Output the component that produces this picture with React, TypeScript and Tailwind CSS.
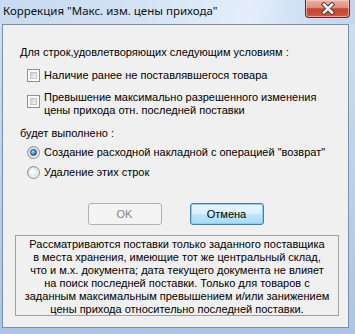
import React from "react";

function CheckBox() {
  return (
    <div className="w-[13px] h-[13px] shrink-0 border border-[#8e8f8f] bg-white p-[2px]">
      <div className="w-full h-full border border-[#c4c4c4] bg-[linear-gradient(135deg,#d0d0d0_0%,#e4e4e4_50%,#f6f6f6_100%)]" />
    </div>
  );
}

function Radio({ checked }: { checked?: boolean }) {
  return (
    <div className="w-[13px] h-[13px] shrink-0 rounded-full border border-[#8e8f8f] bg-[linear-gradient(135deg,#d2d2d2_0%,#f4f4f4_100%)] flex items-center justify-center">
      {checked ? (
        <div className="w-[7px] h-[7px] rounded-full border border-[#1b4f85] bg-[radial-gradient(circle_at_35%_35%,#b8e3ff_0%,#3d8fdb_50%,#14509a_100%)]" />
      ) : (
        <div className="w-[9px] h-[9px] rounded-full bg-[radial-gradient(circle_at_40%_40%,#ffffff_0%,#e6e6e6_70%,#d0d0d0_100%)]" />
      )}
    </div>
  );
}

export default function App() {
  return (
    <div className="w-[355px] h-[334px] flex flex-col bg-[linear-gradient(180deg,#cfe0f3_0%,#bed5ee_40%,#a9c6e7_100%)] overflow-hidden">
      <div className="h-[24px] flex justify-between shrink-0 bg-[linear-gradient(100deg,#c6daf0_0%,#d4e3f4_40%,#e4eefa_70%,#cde0f4_85%,#c0d6ef_100%)]">
        <span className="pl-[3px] pt-[2px] text-[11.5px] leading-[18px] text-[#111] font-['Noto_Sans',sans-serif] whitespace-nowrap">
          Коррекция "Макс. изм. цены прихода"
        </span>
        <div className="w-[45px] h-[18px] mr-[5px] rounded-b-[4px] border border-t-0 border-[#6b2a20] bg-[linear-gradient(180deg,#eab3a6_0%,#df8e7c_45%,#c7432c_52%,#cf5a40_100%)] flex items-center justify-center shadow-[inset_0_0_0_1px_rgba(255,210,200,0.6)]">
          <svg width="16" height="13" viewBox="0 0 16 13">
            <path d="M4 2.5 L12 10.5 M12 2.5 L4 10.5" stroke="#4a3a3a" strokeWidth="4.5" strokeLinecap="square" />
            <path d="M4 2.5 L12 10.5 M12 2.5 L4 10.5" stroke="#ffffff" strokeWidth="2.5" strokeLinecap="square" />
          </svg>
        </div>
      </div>
      <div className="ml-[2px] mr-[6px] mb-[6px] flex-1 border border-[#7d8fa5] bg-[#f0f0f0] flex flex-col font-['Liberation_Sans',Arial,sans-serif] text-[11px] leading-[13px] text-black">
        <div className="mt-[21px] pl-[17px] whitespace-nowrap">Для строк,удовлетворяющих следующим условиям :</div>
        <div className="mt-[10px] pl-[24px] flex items-center gap-[4px]">
          <CheckBox />
          <span className="whitespace-nowrap">Наличие ранее не поставлявшегося товара</span>
        </div>
        <div className="mt-[9px] pl-[24px] flex items-start gap-[4px]">
          <div className="mt-[4px]">
            <CheckBox />
          </div>
          <span className="whitespace-nowrap">
            Превышение максимально разрешенного изменения
            <br />
            цены прихода отн. последней поставки
          </span>
        </div>
        <div className="mt-[10px] pl-[17px] whitespace-nowrap">будет выполнено :</div>
        <div className="mt-[6px] pl-[24px] flex items-center gap-[4px]">
          <Radio checked />
          <span className="whitespace-nowrap">Создание расходной накладной с операцией "возврат"</span>
        </div>
        <div className="mt-[7px] pl-[24px] flex items-center gap-[4px]">
          <Radio />
          <span className="whitespace-nowrap">Удаление этих строк</span>
        </div>
        <div className="mt-[24px] flex justify-center gap-[28px]">
          <div className="w-[74px] h-[22px] rounded-[3px] border border-[#adb2b5] bg-[#f4f4f4] text-[#838383] flex items-center justify-center">
            OK
          </div>
          <div className="w-[74px] h-[22px] rounded-[3px] border border-[#3c7fb1] bg-[linear-gradient(180deg,#eaf6fd_0%,#d9f0fc_50%,#bee6fd_51%,#a7d9f5_100%)] shadow-[inset_0_0_0_1px_#8ed0f5] flex items-center justify-center">
            Отмена
          </div>
        </div>
        <div className="mt-[10px] ml-[12px] w-[324px] h-[81px] border border-[#a0a0a0] pt-[2px] text-center whitespace-nowrap">
          Рассматриваются поставки только заданного поставщика
          <br />
          в места хранения, имеющие тот же центральный склад,
          <br />
          что и м.х. документа; дата текущего документа не влияет
          <br />
          на поиск последней поставки. Только для товаров с
          <br />
          заданным максимальным превышением и/или занижением
          <br />
          цены прихода относительно последней поставки.
        </div>
      </div>
    </div>
  );
}
